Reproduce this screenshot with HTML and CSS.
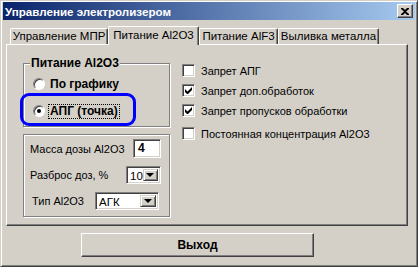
FILE: index.html
```html
<!DOCTYPE html>
<html lang="ru">
<head>
  <meta charset="UTF-8">
  <title>Управление электролизером</title>
  <link rel="stylesheet" href="styles.css">
</head>
<body>
<div class="window">
  <div class="titlebar">
    <span class="title">Управление электролизером</span>
    <button class="close-btn">
      <svg width="8" height="7" viewBox="0 0 8 7"><path d="M0 0h2l2 2 2-2h2v1L5 3.5 8 6v1H6L4 5 2 7H0V6l3-2.5L0 1z" fill="#000"/></svg>
    </button>
  </div>

  <div class="tabs">
    <div class="tab tab-mpr">Управление МПР</div>
    <div class="tab tab-al active">Питание Al2O3</div>
    <div class="tab tab-alf">Питание AlF3</div>
    <div class="tab tab-metal">Выливка металла</div>
  </div>

  <div class="panel">
    <div class="left-col">
      <div class="group group-feed">
        <span class="group-label">Питание Al2O3</span>
        <label class="radio-row">
          <span class="radio"></span>
          <span class="radio-text">По графику</span>
        </label>
        <label class="radio-row">
          <span class="radio checked"></span>
          <span class="radio-text focus">АПГ (точка)</span>
        </label>
        <div class="highlight"></div>
      </div>

      <div class="group group-dose">
        <div class="field-row">
          <span>Масса дозы Al2O3</span>
          <div class="edit">4</div>
        </div>
        <div class="field-row">
          <span>Разброс доз, %</span>
          <div class="combo combo-small"><span class="combo-value">10</span><span class="drop-btn"><i></i></span></div>
        </div>
        <div class="field-row field-type">
          <span>Тип Al2O3</span>
          <div class="combo combo-wide"><span class="combo-value">АГК</span><span class="drop-btn"><i></i></span></div>
        </div>
      </div>
    </div>

    <div class="right-col">
      <label class="check-row"><span class="check"></span>Запрет АПГ</label>
      <label class="check-row"><span class="check checked"><svg width="7" height="7" viewBox="0 0 7 7"><path d="M0 2v3l2 2h1l4-4V0L2.5 4.5z" fill="#000"/></svg></span>Запрет доп.обработок</label>
      <label class="check-row"><span class="check checked"><svg width="7" height="7" viewBox="0 0 7 7"><path d="M0 2v3l2 2h1l4-4V0L2.5 4.5z" fill="#000"/></svg></span>Запрет пропусков обработки</label>
      <label class="check-row check-gap"><span class="check"></span>Постоянная концентрация Al2O3</label>
    </div>
  </div>

  <button class="exit-btn">Выход</button>
</div>
</body>
</html>
```

FILE: styles.css
```css
body {
  margin: 0;
  background-color: #d4d0c8;
  font-family: 'Liberation Sans', Arial, sans-serif;
  font-size: 11px;
  color: #000;
}
.window {
  width: 418px;
  height: 267px;
  box-sizing: border-box;
  padding: 1px;
  border: 1px solid;
  border-color: #d4d0c8 #404040 #404040 #d4d0c8;
  box-shadow: inset 1px 1px 0 #fff, inset -1px -1px 0 #808080;
  background-color: #d4d0c8;
  display: flex;
  flex-direction: column;
}
.titlebar {
  height: 18px;
  margin: 0 1px;
  background: linear-gradient(to right, #0a246a, #a6caf0);
  display: flex;
  align-items: center;
  justify-content: space-between;
  padding: 0 2px 0 2px;
}
.title {
  color: #fff;
  font-weight: bold;
  font-size: 11.6px;
}
.close-btn {
  width: 16px;
  height: 14px;
  padding: 0;
  background-color: #d4d0c8;
  border: 1px solid;
  border-color: #fff #404040 #404040 #fff;
  box-shadow: inset -1px -1px 0 #808080;
  display: flex;
  align-items: center;
  justify-content: center;
}

/* tabs */
.tabs {
  display: flex;
  align-items: flex-end;
  height: 18px;
  margin: 6px 0 0 6px;
  padding-left: 2px;
}
.tab {
  box-sizing: border-box;
  height: 16px;
  border: 1px solid;
  border-color: #fff #404040 transparent #fff;
  border-bottom: none;
  border-radius: 2px 2px 0 0;
  box-shadow: inset -1px 0 0 #808080;
  font-size: 11.5px;
  line-height: 15px;
  text-align: center;
  white-space: nowrap;
}
.tab.active {
  height: 19px;
  margin-bottom: -1px;
  position: relative;
  z-index: 1;
  background-color: #d4d0c8;
  line-height: 16px;
}
.tab-mpr { width: 98px; }
.tab-al { width: 91px; }
.tab-alf { width: 79px; }
.tab-metal { width: 101px; }

.panel {
  box-sizing: border-box;
  width: 402px;
  height: 182px;
  margin-left: 4px;
  border: 1px solid;
  border-color: #fff #404040 #404040 #fff;
  box-shadow: inset -1px -1px 0 #808080;
  display: flex;
}
.left-col {
  margin: 18px 0 0 16px;
  width: 147px;
}

/* group boxes */
.group {
  position: relative;
  box-sizing: border-box;
  width: 147px;
  border: 1px solid #808080;
  box-shadow: inset 1px 1px 0 #fff, 1px 1px 0 #fff;
}
.group-label {
  position: absolute;
  top: -7px;
  left: 6px;
  padding: 0 1px;
  background-color: #d4d0c8;
  font-weight: bold;
  font-size: 12px;
  line-height: 13px;
}
.group-feed {
  height: 64px;
  padding: 14px 0 0 9px;
}
.radio-row {
  display: flex;
  align-items: center;
  height: 12px;
  gap: 5px;
  margin-bottom: 15px;
}
.radio {
  box-sizing: border-box;
  width: 12px;
  height: 12px;
  border-radius: 50%;
  background-color: #fff;
  border: 1px solid;
  border-color: #808080 #fff #fff #808080;
  box-shadow: inset 1px 1px 0 #404040;
  display: flex;
  align-items: center;
  justify-content: center;
}
.radio.checked::after {
  content: "";
  width: 4px;
  height: 4px;
  border-radius: 50%;
  background-color: #000;
}
.radio-text {
  font-weight: bold;
  font-size: 12px;
  line-height: 13px;
  padding: 0 1px;
  margin-left: -1px;
}
.radio-text.focus {
  outline: 1px dotted #000;
  outline-offset: 0;
}
.highlight {
  position: absolute;
  left: -4px;
  top: 29px;
  width: 116px;
  height: 33px;
  box-sizing: border-box;
  border: 3px solid #0000ff;
  border-radius: 9px;
}

.group-dose {
  height: 83px;
  margin-top: 7px;
  padding: 4px 8px 0 6px;
}
.field-row {
  display: flex;
  align-items: center;
  justify-content: space-between;
  height: 19px;
  margin-bottom: 7px;
  white-space: nowrap;
}
.field-type {
  padding-left: 2px;
  margin-right: 2px;
}
.edit,
.combo {
  box-sizing: border-box;
  height: 19px;
  background-color: #fff;
  border: 1px solid;
  border-color: #808080 #fff #fff #808080;
  box-shadow: inset 1px 1px 0 #404040, inset -1px -1px 0 #d4d0c8;
}
.edit {
  width: 28px;
  padding-left: 4px;
  font-weight: bold;
  font-size: 12px;
  line-height: 17px;
}
.combo {
  display: flex;
  align-items: stretch;
  padding: 2px;
  height: 18px;
}
.combo-small { width: 35px; }
.combo-wide { width: 64px; }
.combo-value {
  flex: 1;
  font-size: 11.5px;
  line-height: 14px;
  padding-left: 1px;
}
.drop-btn {
  box-sizing: border-box;
  width: 16px;
  background-color: #d4d0c8;
  border: 1px solid;
  border-color: #d4d0c8 #404040 #404040 #d4d0c8;
  box-shadow: inset 1px 1px 0 #fff, inset -1px -1px 0 #808080;
  display: flex;
  align-items: center;
  justify-content: center;
}
.drop-btn i {
  width: 0;
  height: 0;
  border-left: 4px solid transparent;
  border-right: 4px solid transparent;
  border-top: 4px solid #000;
  margin-left: -1px;
}

/* checkboxes */
.right-col {
  margin: 19px 0 0 12px;
}
.check-row {
  display: flex;
  align-items: center;
  gap: 6px;
  height: 13px;
  margin-bottom: 7px;
  white-space: nowrap;
}
.check-gap {
  margin-top: 10px;
}
.check {
  box-sizing: border-box;
  width: 13px;
  height: 13px;
  background-color: #fff;
  border: 1px solid;
  border-color: #808080 #fff #fff #808080;
  box-shadow: inset 1px 1px 0 #404040, inset -1px -1px 0 #d4d0c8;
  display: flex;
  align-items: center;
  justify-content: center;
}

.exit-btn {
  width: 233px;
  height: 24px;
  margin: 7px 0 0 79px;
  background-color: #d4d0c8;
  border: 1px solid;
  border-color: #fff #404040 #404040 #fff;
  box-shadow: inset -1px -1px 0 #808080;
  font-family: 'Liberation Sans', Arial, sans-serif;
  font-weight: bold;
  font-size: 12px;
  color: #000;
}
```
